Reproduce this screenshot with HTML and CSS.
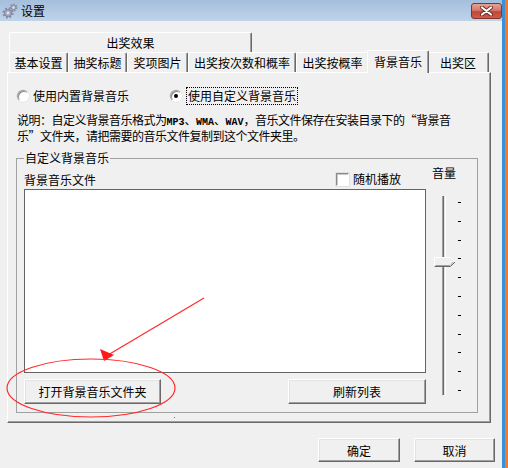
FILE: index.html
```html
<!DOCTYPE html>
<html lang="zh-CN">

<head>
    <meta charset="UTF-8">
    <meta name="viewport" content="width=device-width, initial-scale=1.0">
    <title>设置</title>
    <link rel="stylesheet" href="styles.css">
</head>

<body>
    <div class="window">
        <div class="titlebar">
            <svg class="app-icon" width="16" height="16" viewBox="0 0 16 16">
                <circle cx="6" cy="10" r="4.3" fill="none" stroke="#8c8ca6" stroke-width="2.6" stroke-dasharray="1.8 1.6"/>
                <circle cx="6" cy="10" r="3.6" fill="#a9a9c2" stroke="#7a7a94" stroke-width="0.8"/>
                <circle cx="6" cy="10" r="1.3" fill="#e8e8f0"/>
                <circle cx="11.5" cy="4.5" r="3" fill="none" stroke="#8c8ca6" stroke-width="2" stroke-dasharray="1.4 1.3"/>
                <circle cx="11.5" cy="4.5" r="2.4" fill="#b4b4cc" stroke="#7a7a94" stroke-width="0.7"/>
                <circle cx="11.5" cy="4.5" r="0.9" fill="#e8e8f0"/>
            </svg>
            <span class="title">设置</span>
            <button class="close-btn" type="button">
                <svg width="15" height="10" viewBox="0 0 15 10">
                    <path d="M3 1.5 L12 8.5 M12 1.5 L3 8.5" stroke="#6e2a22" stroke-width="4" stroke-linecap="round"/>
                    <path d="M3 1.5 L12 8.5 M12 1.5 L3 8.5" stroke="#fff" stroke-width="2.2" stroke-linecap="round"/>
                </svg>
            </button>
        </div>

        <div class="client">
            <div class="tabs">
                <div class="tab-row">
                    <div class="tab tab-wide">出奖效果</div>
                </div>
                <div class="tab-row lower">
                    <div class="tab">基本设置</div>
                    <div class="tab">抽奖标题</div>
                    <div class="tab">奖项图片</div>
                    <div class="tab">出奖按次数和概率</div>
                    <div class="tab">出奖按概率</div>
                    <div class="tab active">背景音乐</div>
                    <div class="tab">出奖区</div>
                </div>
            </div>

            <div class="panel">
                <div class="options">
                    <label class="option">
                        <span class="radio"></span>
                        <span>使用内置背景音乐</span>
                    </label>
                    <label class="option">
                        <span class="radio checked"></span>
                        <span class="focus">使用自定义背景音乐</span>
                    </label>
                </div>

                <p class="desc">说明：自定义背景音乐格式为<span class="ascii">MP3</span>、<span class="ascii">WMA</span>、<span class="ascii">WAV</span>，音乐文件保存在安装目录下的“背景音<br>乐”文件夹，请把需要的音乐文件复制到这个文件夹里。</p>

                <fieldset class="group">
                    <legend>自定义背景音乐</legend>
                    <div class="group-body">
                        <div class="music-col">
                            <div class="list-head">
                                <span>背景音乐文件</span>
                                <label class="check-option">
                                    <span class="checkbox"></span>
                                    <span>随机播放</span>
                                </label>
                            </div>
                            <div class="listbox"></div>
                            <div class="list-actions">
                                <button class="btn btn-open" type="button">打开背景音乐文件夹</button>
                                <button class="btn btn-refresh" type="button">刷新列表</button>
                            </div>
                        </div>
                        <div class="volume">
                            <div class="volume-label">音量</div>
                            <div class="slider">
                                <div class="track"></div>
                                <div class="ticks">
                                    <span></span><span></span><span></span><span></span>
                                    <span></span><span></span><span></span><span></span>
                                    <span></span><span></span><span></span>
                                </div>
                                <svg class="thumb" width="22" height="11" viewBox="0 0 22 11">
                                    <path d="M0.5 0.5 H16.5 L21 5 L16.5 9.5 H0.5 Z" fill="#f0f0f0"/>
                                    <path d="M0.5 10 V0.5 H16.5 L21 5" fill="none" stroke="#fff"/>
                                    <path d="M0.5 9.5 H16.5 L21 5" fill="none" stroke="#696969"/>
                                    <path d="M1.5 8.5 H16 L19.5 5" fill="none" stroke="#a0a0a0"/>
                                </svg>
                            </div>
                        </div>
                    </div>
                </fieldset>
            </div>

            <div class="footer">
                <button class="btn btn-ok" type="button">确定</button>
                <button class="btn btn-cancel" type="button">取消</button>
            </div>
        </div>

        <!-- red annotation drawn over the dialog -->
        <svg class="annotation" width="508" height="468" viewBox="0 0 508 468">
            <line x1="204" y1="298" x2="108" y2="355" stroke="#ff2a2a" stroke-width="1.2"/>
            <polygon points="100,349 114,355 104,361" fill="#ff1a1a"/>
            <ellipse cx="91" cy="388" rx="84" ry="29" fill="none" stroke="#ff2a2a" stroke-width="1.2"/>
            <rect x="174" y="417" width="1" height="1" fill="#ff4040"/>
        </svg>
    </div>
</body>

</html>
```

FILE: styles.css
```css
* {
    margin: 0;
    padding: 0;
    box-sizing: border-box;
}

body {
    background-color: #f0f0f0;
    font-family: "Noto Sans CJK SC", "Liberation Sans", sans-serif;
    font-size: 12px;
    color: #000;
    overflow: hidden;
}

.window {
    position: relative;
    width: 505px;
    height: 468px;
    background-color: #f0f0f0;
    border-right: 3px solid #3d8fd8;
    box-shadow: 3px 0 0 #ef7b2b;
}

/* title bar */
.titlebar {
    display: flex;
    align-items: center;
    height: 21px;
    padding-left: 2px;
    background: linear-gradient(#a4bedc, #bfd4ea);
}

.app-icon {
    flex: none;
}

.title {
    margin-left: 3px;
    line-height: 21px;
}

.close-btn {
    align-self: flex-start;
    display: flex;
    align-items: center;
    justify-content: center;
    width: 31px;
    height: 16px;
    margin: 3px 0 0 auto;
    border: 1px solid #80342a;
    border-radius: 3px;
    background: linear-gradient(#e3a496 0%, #d5786a 45%, #c0473a 55%, #cc5c4c 100%);
}

/* tabs */
.client {
    padding: 11px 0 0 7px;
}

.tabs {
    padding-left: 2px;
}

.tab-row {
    display: flex;
    height: 20px;
}

.tab {
    flex: none;
    display: flex;
    align-items: center;
    justify-content: center;
    height: 20px;
    border-top: 1px solid #fff;
    border-left: 1px solid #fff;
    border-right: 1px solid #696969;
    border-radius: 2px 2px 0 0;
    box-shadow: inset -1px 0 0 #a0a0a0;
    line-height: 12px;
    white-space: nowrap;
}

.tab-wide {
    width: 243px;
}

.lower .tab:nth-child(1),
.lower .tab:nth-child(2) {
    width: 59px;
}

.lower .tab:nth-child(3) {
    width: 61px;
}

.lower .tab:nth-child(4) {
    width: 108px;
}

.lower .tab:nth-child(5) {
    width: 73px;
}

.lower .tab:nth-child(7) {
    width: 62px;
}

.tab.active {
    position: relative;
    z-index: 1;
    width: 62px;
    height: 23px;
    margin: -2px -2px 0;
    background-color: #f0f0f0;
}

/* tab page */
.panel {
    width: 484px;
    height: 351px;
    padding: 0 10px 0 8px;
    border-top: 1px solid #fff;
    border-left: 1px solid #fff;
    border-right: 1px solid #696969;
    border-bottom: 1px solid #696969;
    box-shadow: inset -1px -1px 0 #a0a0a0;
}

.options {
    display: flex;
    align-items: center;
    height: 13px;
    margin-top: 16px;
    padding-left: 1px;
}

.option {
    display: flex;
    align-items: center;
    gap: 4px;
    line-height: 14px;
}

.option:first-child {
    width: 153px;
}

.radio {
    position: relative;
    width: 12px;
    height: 12px;
    border-radius: 50%;
    border: 1px solid;
    border-color: #a0a0a0 #fff #fff #a0a0a0;
    background-color: #fff;
    box-shadow: inset 1px 1px 0 #8a8a8a, 0 0 0 0.5px #d8d8d8;
}

.radio.checked::after {
    content: "";
    position: absolute;
    top: 3px;
    left: 3px;
    width: 4px;
    height: 4px;
    border-radius: 50%;
    background-color: #000;
}

.focus {
    padding: 1px 1px;
    border: 1px dotted #000;
}

.desc {
    margin-top: 11px;
    padding-left: 1px;
    line-height: 13px;
    letter-spacing: -0.5px;
    white-space: nowrap;
}

/* latin letters in the old dialog font are half width */
.ascii {
    font-family: "Liberation Mono", monospace;
    font-size: 10px;
    font-weight: bold;
    letter-spacing: 0;
}

/* group box */
.group {
    width: 462px;
    margin-top: 9px;
    padding: 0 0 8px 7px;
    border: 1px solid #a0a0a0;
}

.group legend {
    padding: 0 1px;
    line-height: 14px;
}

.group-body {
    display: flex;
}

.music-col {
    width: 402px;
}

.list-head {
    display: flex;
    align-items: flex-end;
    justify-content: space-between;
    height: 24px;
    padding: 0 25px 2px 0;
    line-height: 14px;
}

.check-option {
    display: flex;
    align-items: center;
    gap: 4px;
    margin-bottom: 1px;
}

.checkbox {
    width: 13px;
    height: 13px;
    border: 1px solid;
    border-color: #8a8a8a #fff #fff #8a8a8a;
    background-color: #fff;
    box-shadow: inset 1px 1px 0 #c8c8c8, 0 0 0 0.5px #d0d0d0;
}

.listbox {
    height: 184px;
    border: 1px solid #646464;
    background-color: #fff;
}

.list-actions {
    display: flex;
    justify-content: space-between;
    margin-top: 6px;
}

.btn {
    height: 25px;
    border: 1px solid;
    border-color: #fff #696969 #696969 #fff;
    background-color: #f0f0f0;
    box-shadow: inset -1px -1px 0 #a0a0a0, inset 1px 1px 0 #e3e3e3;
    font-family: inherit;
    font-size: 12px;
    color: #000;
}

.btn-open {
    width: 137px;
}

.btn-refresh {
    width: 138px;
}

/* volume slider */
.volume {
    width: 51px;
    padding-left: 6px;
}

.volume-label {
    line-height: 16px;
}

.slider {
    position: relative;
    display: flex;
    height: 200px;
    margin: 15px 0 0 10px;
}

.track {
    width: 4px;
    height: 200px;
    border-left: 1px solid #a0a0a0;
    border-right: 1px solid #fff;
    border-bottom: 1px solid #fff;
    background-color: #e3e3e3;
    box-shadow: inset 1px 0 0 #696969;
}

.ticks {
    display: flex;
    flex-direction: column;
    justify-content: space-between;
    height: 189px;
    margin: 6px 0 0 12px;
}

.ticks span {
    width: 3px;
    height: 1px;
    background-color: #000;
}

.thumb {
    position: absolute;
    top: 61px;
    left: -8px;
}

/* dialog buttons */
.footer {
    display: flex;
    justify-content: flex-end;
    gap: 14px;
    padding: 15px 7px 0 0;
}

.footer .btn {
    height: 24px;
}

.btn-ok {
    width: 82px;
}

.btn-cancel {
    width: 81px;
}

.annotation {
    position: absolute;
    top: 0;
    left: 0;
    pointer-events: none;
}
```
